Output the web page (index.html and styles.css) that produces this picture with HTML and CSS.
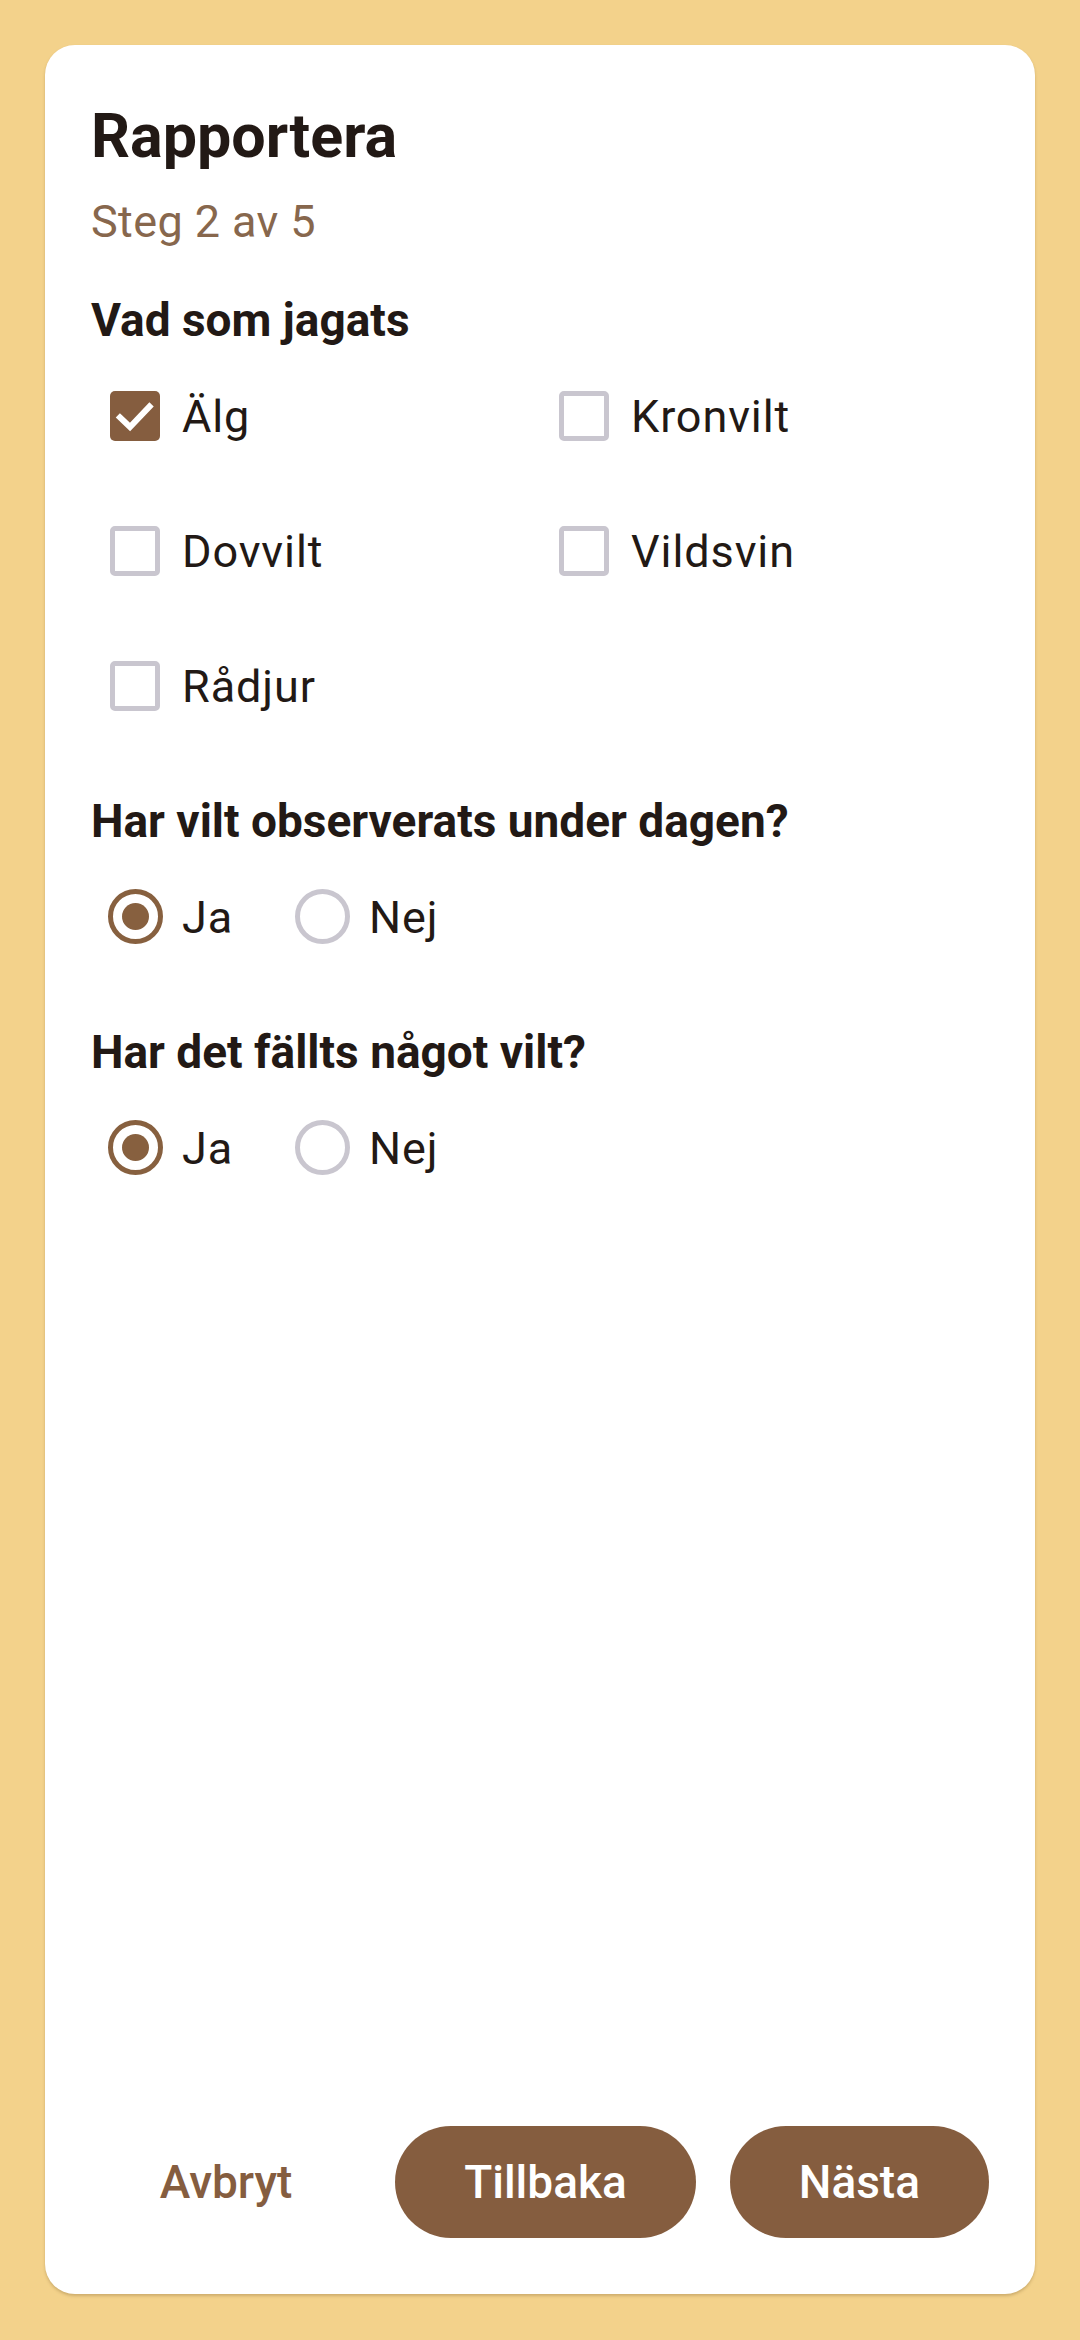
FILE: index.html
```html
<!DOCTYPE html>
<html lang="sv">
<head>
    <meta charset="UTF-8">
    <meta name="viewport" content="width=device-width, initial-scale=1.0">
    <title>Rapportera</title>
    <link rel="stylesheet" href="styles.css">
</head>
<body>
    <div class="screen">
        <div class="card">
            <h1>Rapportera</h1>
            <p class="step">Steg 2 av 5</p>

            <!-- Vad som jagats -->
            <h2>Vad som jagats</h2>
            <div class="check-grid">
                <label class="option">
                    <span class="control"><span class="checkbox checked">
                        <svg viewBox="0 0 50 50" width="50" height="50"><path d="M10 26.5 L20 36 L39.5 15.5" fill="none" stroke="#fff" stroke-width="6" stroke-linecap="square"/></svg>
                    </span></span>
                    <span class="option-text">Älg</span>
                </label>
                <label class="option">
                    <span class="control"><span class="checkbox"></span></span>
                    <span class="option-text">Kronvilt</span>
                </label>
                <label class="option">
                    <span class="control"><span class="checkbox"></span></span>
                    <span class="option-text">Dovvilt</span>
                </label>
                <label class="option">
                    <span class="control"><span class="checkbox"></span></span>
                    <span class="option-text">Vildsvin</span>
                </label>
                <label class="option">
                    <span class="control"><span class="checkbox"></span></span>
                    <span class="option-text">Rådjur</span>
                </label>
            </div>

            <!-- Observationer -->
            <h2>Har vilt observerats under dagen?</h2>
            <div class="radio-row">
                <label class="option">
                    <span class="control"><span class="radio checked"></span></span>
                    <span class="option-text">Ja</span>
                </label>
                <label class="option">
                    <span class="control"><span class="radio"></span></span>
                    <span class="option-text">Nej</span>
                </label>
            </div>

            <!-- Fällt vilt -->
            <h2>Har det fällts något vilt?</h2>
            <div class="radio-row">
                <label class="option">
                    <span class="control"><span class="radio checked"></span></span>
                    <span class="option-text">Ja</span>
                </label>
                <label class="option">
                    <span class="control"><span class="radio"></span></span>
                    <span class="option-text">Nej</span>
                </label>
            </div>

            <div class="spacer"></div>

            <div class="actions">
                <button class="btn-text">Avbryt</button>
                <button class="btn-filled">Tillbaka</button>
                <button class="btn-filled">Nästa</button>
            </div>
        </div>
    </div>
</body>
</html>
```
FILE: styles.css
```css
* {
    margin: 0;
    padding: 0;
    box-sizing: border-box;
    font-family: Roboto, 'Noto Sans', sans-serif;
}

body {
    background-color: #f3d28b;
    color: #221915;
}

.screen {
    height: 2340px;
    padding: 45px 45px 46px;
    display: flex;
    flex-direction: column;
}

.card {
    flex: 1;
    display: flex;
    flex-direction: column;
    background: #fff;
    border-radius: 30px;
    padding: 55px 46px 56px;
    box-shadow: 0 2px 3px rgba(120, 90, 40, 0.3);
}

h1 {
    font-size: 61px;
    line-height: 72px;
    font-weight: 700;
}

.step {
    margin-top: 22px;
    font-size: 45px;
    line-height: 56px;
    letter-spacing: 0.4px;
    color: #87674d;
}

h2 {
    margin-top: 40px;
    font-size: 46px;
    line-height: 56px;
    font-weight: 700;
}

.step + h2 {
    margin-top: 42px;
}

.check-grid {
    display: grid;
    grid-template-columns: 1fr 1fr;
}

.option {
    display: flex;
    align-items: center;
    height: 135px;
    padding-left: 16px;
}

.control {
    width: 56px;
    height: 56px;
    display: flex;
    align-items: center;
    justify-content: center;
}

.option-text {
    margin-left: 19px;
    font-size: 45px;
    letter-spacing: 0.9px;
    padding-top: 2px;
}

.checkbox {
    width: 50px;
    height: 50px;
    border: 5px solid #c9c6cf;
    border-radius: 5px;
}

.checkbox.checked {
    border: none;
    background: #855d3f;
}

.checkbox svg {
    display: block;
}

.radio {
    width: 55px;
    height: 55px;
    border: 5.5px solid #c9c6cf;
    border-radius: 50%;
    display: flex;
    align-items: center;
    justify-content: center;
}

.radio.checked {
    border-color: #87603f;
}

.radio.checked::after {
    content: '';
    width: 27px;
    height: 27px;
    border-radius: 50%;
    background: #87603f;
}

.radio-row {
    display: flex;
    gap: 45px;
}

.spacer {
    flex: 1;
}

.actions {
    display: flex;
    align-items: center;
    gap: 34px;
}

.actions button {
    height: 112px;
    border: none;
    border-radius: 56px;
    font-size: 46px;
    font-weight: 500;
    cursor: pointer;
}

.btn-text {
    flex: 1;
    background: none;
    color: #855d3f;
}

.btn-filled {
    padding: 0 69px;
    background: #855d3f;
    color: #fff;
}
```
